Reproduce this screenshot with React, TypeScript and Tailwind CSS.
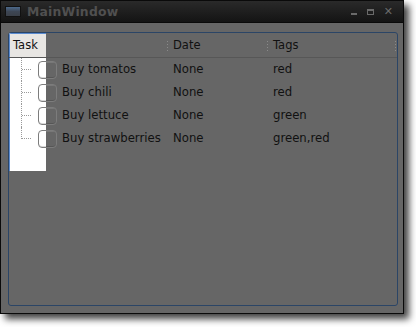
const rows = [
  { task: "Buy tomatos", date: "None", tags: "red" },
  { task: "Buy chili", date: "None", tags: "red" },
  { task: "Buy lettuce", date: "None", tags: "green" },
  { task: "Buy strawberries", date: "None", tags: "green,red" },
];

function Grip() {
  return (
    <div className="flex flex-col gap-[2px]">
      <span className="w-px h-px bg-[#8a8a8a]" />
      <span className="w-px h-px bg-[#8a8a8a]" />
      <span className="w-px h-px bg-[#8a8a8a]" />
      <span className="w-px h-px bg-[#8a8a8a]" />
    </div>
  );
}

function TreeLines({ last }: { last: boolean }) {
  return (
    <div className="relative w-[29px] h-full">
      <div
        className={`absolute left-[12px] top-0 border-l border-dotted border-[#9a9a9a] ${
          last ? "h-[12px]" : "h-full"
        }`}
      />
      <div className="absolute left-[13px] top-[11px] w-[9px] border-t border-dotted border-[#9a9a9a]" />
    </div>
  );
}

export default function App() {
  return (
    <div
      className="w-[416px] h-[327px] bg-white relative overflow-hidden"
      style={{ fontFamily: '"DejaVu Sans", sans-serif' }}
    >
      <div className="w-[404px] h-[314px] border border-[#0a0a0a] bg-[#666666] flex flex-col shadow-[5px_5px_7px_rgba(0,0,0,0.75)]">
        {/* title bar */}
        <div className="h-[22px] flex items-center bg-gradient-to-b from-[#2a2a2a] to-[#141414] border-b border-[#0a0a0a]">
          <div className="ml-[4px] w-[16px] h-[11px] border border-[#111] bg-gradient-to-b from-[#4d6a8c] via-[#3d4654] to-[#3a3f48]" />
          <span className="ml-[6px] mt-[2px] text-[12.4px] font-bold text-[#505050] tracking-[0.2px]">
            MainWindow
          </span>
          <div className="ml-auto flex items-center gap-[10px] mr-[10px] text-[#6a6a6a]">
            <span className="w-[6px] h-[2px] mt-[5px] bg-[#6a6a6a]" />
            <span className="w-[7px] h-[6px] border border-[#6a6a6a] border-t-2" />
            <span className="text-[11px] font-bold leading-none">✕</span>
          </div>
        </div>

        {/* content */}
        <div className="flex-1 pl-[7px] pr-[5px] pt-[9px] pb-[7px]">
          <div className="relative h-full border border-[#2b4566] rounded-[3px] overflow-hidden">
            {/* light strip over first column */}
            <div className="absolute left-0 top-0 w-[37px] h-[138px] bg-white flex flex-col">
              <div className="h-[25px] bg-[#e8e6e3] border-b border-[#cfcdca]" />
            </div>
            <div className="absolute left-0 top-0 w-px h-[138px] bg-[#5a8bd0]" />
            <div className="absolute left-0 top-0 w-[37px] h-px bg-[#5a8bd0]" />

            <div className="relative">
              {/* header */}
              <div className="h-[25px] pt-[2px] flex items-center text-[11.5px] text-[#111] border-b border-[#575757]">
                <div className="w-[159px] flex items-center pl-[4px]">
                  <span>Task</span>
                  <div className="ml-auto">
                    <Grip />
                  </div>
                </div>
                <div className="w-[100px] flex items-center pl-[5px]">
                  <span>Date</span>
                  <div className="ml-auto">
                    <Grip />
                  </div>
                </div>
                <div className="flex-1 flex items-center pl-[5px] pr-[1px]">
                  <span>Tags</span>
                  <div className="ml-auto">
                    <Grip />
                  </div>
                </div>
              </div>

              {/* rows */}
              {rows.map((r, i) => (
                <div
                  key={r.task}
                  className="h-[23px] flex items-center text-[11.7px] text-[#111]"
                >
                  <div className="w-[159px] h-full flex items-center">
                    <TreeLines last={i === rows.length - 1} />
                    <div className="w-[19px] h-[18px] rounded-[4px] border border-[#7c7c7c] shadow-[inset_1px_1px_0_rgba(255,255,255,0.12),inset_0_-1px_0_rgba(0,0,0,0.15)]" />
                    <span className="ml-[5px] whitespace-nowrap">{r.task}</span>
                  </div>
                  <div className="w-[100px] pl-[5px]">{r.date}</div>
                  <div className="flex-1 pl-[5px]">{r.tags}</div>
                </div>
              ))}
            </div>
          </div>
        </div>
      </div>
    </div>
  );
}
